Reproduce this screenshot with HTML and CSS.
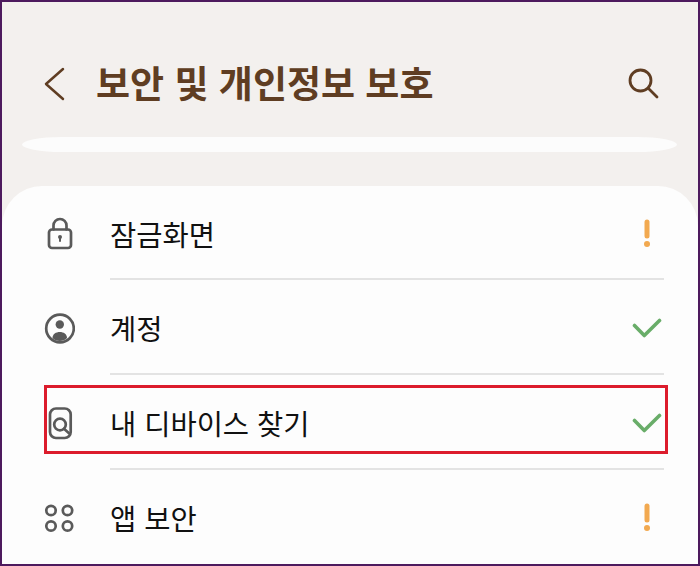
FILE: index.html
```html
<!DOCTYPE html>
<html lang="ko">
  <head>
    <meta charset="UTF-8" />
    <meta name="viewport" content="width=device-width, initial-scale=1.0" />
    <title>보안 및 개인정보 보호</title>
    <link rel="stylesheet" href="styles.css">
  </head>
  <body>
    <div class="screen">
      <header class="topbar">
        <svg class="back-icon" width="24" height="36" viewBox="0 0 24 36">
          <path d="M20 3 L3 18 L20 33" />
        </svg>
        <h1>보안 및 개인정보 보호</h1>
        <svg class="search-icon" width="32" height="32" viewBox="0 0 32 32">
          <circle cx="13.500" cy="13.500" r="10.500" />
          <path d="M21.500 21.500 L30 30" />
        </svg>
      </header>
      <div class="sliver"></div>
      <ul class="card">
        <li class="row">
          <svg class="row-icon" width="32" height="36" viewBox="0 0 32 36">
            <rect x="6" y="14.500" width="22" height="18.500" rx="3" />
            <path d="M10.500 14.500 V10.500 a6.500 6.500 0 0 1 13 0 V14.500" />
            <circle class="fill" cx="17" cy="22" r="2" />
            <path class="thin" d="M17 22 V26" />
          </svg>
          <span class="row-label">잠금화면</span>
          <svg class="warn" width="10" height="30" viewBox="0 0 10 30">
            <path d="M5 4 V18" />
            <circle cx="5" cy="26" r="3" />
          </svg>
        </li>
        <li class="row">
          <svg class="row-icon" width="32" height="36" viewBox="0 0 32 36">
            <circle cx="17" cy="19.500" r="13.800" />
            <circle class="fill" cx="16.800" cy="15.500" r="4.200" />
            <path class="fill" d="M9.500 29 C9.500 25 13 23 16.800 23 C20.500 23 24 25 24 29 C21 33 12.500 33 9.500 29 Z" />
          </svg>
          <span class="row-label">계정</span>
          <svg class="check" width="32" height="22" viewBox="0 0 32 22">
            <path d="M3.500 9.500 L13.300 19.500 L28.500 4.500" />
          </svg>
        </li>
        <li class="row">
          <svg class="row-icon" width="32" height="36" viewBox="0 0 32 36">
            <rect x="7" y="4.500" width="20.700" height="29.500" rx="6" />
            <circle cx="17" cy="20.500" r="5.800" />
            <path d="M21 24.800 L26 29.200" />
          </svg>
          <span class="row-label">내 디바이스 찾기</span>
          <svg class="check" width="32" height="22" viewBox="0 0 32 22">
            <path d="M3.500 9.500 L13.300 19.500 L28.500 4.500" />
          </svg>
        </li>
        <li class="row">
          <svg class="row-icon apps" width="32" height="36" viewBox="0 0 32 36">
            <circle cx="8" cy="11.500" r="4.700" />
            <circle cx="24.500" cy="11.500" r="4.700" />
            <circle cx="8" cy="27" r="4.700" />
            <circle cx="24.500" cy="27" r="4.700" />
          </svg>
          <span class="row-label">앱 보안</span>
          <svg class="warn" width="10" height="30" viewBox="0 0 10 30">
            <path d="M5 4 V18" />
            <circle cx="5" cy="26" r="3" />
          </svg>
        </li>
      </ul>
      <div class="highlight"></div>
    </div>
  </body>
</html>
```

FILE: styles.css
```css
* {
  box-sizing: border-box;
}
body {
  margin: 0;
  padding: 0;
  font-family: "Noto Sans CJK KR", "Noto Sans", sans-serif;
}
svg {
  flex: none;
  fill: none;
}
.screen {
  position: relative;
  width: 700px;
  height: 566px;
  border: 2px solid #4d1a5e;
  background-color: #f3f0ee;
  overflow: hidden;
  display: flex;
  flex-direction: column;
}
.topbar {
  flex: none;
  height: 135px;
  padding: 29px 39px 0 41px;
  display: flex;
  align-items: center;
}
.topbar h1 {
  margin: 0 0 3px 29px;
  flex: 1;
  font-size: 37px;
  font-weight: 700;
  color: #5f3d22;
  line-height: 1;
}
.back-icon path {
  stroke: #5f3d22;
  stroke-width: 2.500;
  stroke-linecap: round;
  stroke-linejoin: round;
}
.search-icon {
  margin-bottom: 3px;
}
.search-icon circle,
.search-icon path {
  stroke: #5f3d22;
  stroke-width: 2.800;
  stroke-linecap: round;
}
.sliver {
  flex: none;
  height: 15px;
  margin: 0 21px 0 20px;
  background-color: #fcfcfc;
  border-radius: 40px / 7.500px;
}
.card {
  list-style: none;
  margin: 34px 0 0;
  padding: 0;
  flex: 1;
  background-color: #fdfdfd;
  border-radius: 40px 40px 0 0;
}
.row {
  position: relative;
  height: 95px;
  padding: 0 35px 0 41px;
  display: flex;
  align-items: center;
}
.row:first-child {
  height: 93px;
}
.row + .row::before {
  content: "";
  position: absolute;
  top: -1px;
  left: 108px;
  right: 34px;
  height: 2px;
  background-color: #e3e3e3;
}
.row-label {
  flex: 1;
  margin-left: 35px;
  padding-top: 3px;
  font-size: 28.500px;
  line-height: 1;
  color: #111;
}
.row-icon circle,
.row-icon rect,
.row-icon path {
  stroke: #5a5a5a;
  stroke-width: 2.700;
  stroke-linecap: round;
}
.row-icon .fill {
  fill: #5a5a5a;
  stroke: none;
}
.row-icon .thin {
  stroke-width: 2;
}
.warn {
  margin-right: 11px;
}
.warn path {
  stroke: #f2a950;
  stroke-width: 5;
  stroke-linecap: round;
}
.warn circle {
  fill: #f2a950;
}
.check path {
  stroke: #69ad69;
  stroke-width: 3.600;
  stroke-linecap: round;
  stroke-linejoin: round;
}
.highlight {
  position: absolute;
  left: 42px;
  top: 383px;
  width: 624px;
  height: 69px;
  border: 3px solid #dc1c2c;
}
```
